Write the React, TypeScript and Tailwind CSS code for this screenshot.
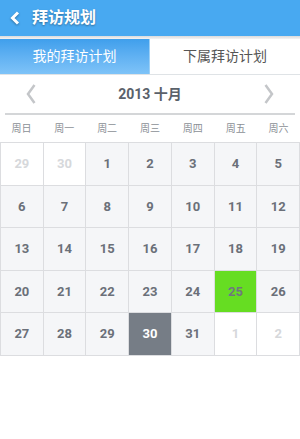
type Day = { n: number; other?: boolean; green?: boolean; dark?: boolean };

const weekdays = ['周日', '周一', '周二', '周三', '周四', '周五', '周六'];

const buildDays = (): Day[] => {
  const days: Day[] = [{ n: 29, other: true }, { n: 30, other: true }];
  for (let i = 1; i <= 31; i++) {
    days.push({ n: i, green: i === 25, dark: i === 30 });
  }
  days.push({ n: 1, other: true }, { n: 2, other: true });
  return days;
};

const App = () => {
  const days = buildDays();

  return (
    <div
      className="w-[300px] h-[439px] bg-white overflow-hidden"
      style={{ fontFamily: 'Roboto, "Noto Sans CJK SC", sans-serif' }}
    >
      {/* title bar */}
      <div className="h-[36px] bg-[#48a9f1] flex items-center pl-[10px]">
        <svg width="10" height="14" viewBox="0 0 10 14" className="mr-[12px] drop-shadow-[0_1px_1px_rgba(0,0,0,0.35)]">
          <polyline points="8,1.5 2.5,7 8,12.5" fill="none" stroke="white" strokeWidth="3" strokeLinejoin="miter" />
        </svg>
        <span className="text-white text-[16px] font-bold [text-shadow:0_1px_2px_rgba(0,0,0,0.35)]">拜访规划</span>
      </div>
      <div className="h-[3px] bg-gradient-to-b from-[#d9dadc] to-[#f4f4f4]" />

      {/* tabs */}
      <div className="flex h-[36px] border-b border-[#dfe3e6]">
        <div className="w-[150px] bg-gradient-to-b from-[#3f9fec] to-[#7ec3f8] border-r border-[#9cd0f7] flex items-center justify-center text-white text-[14px]">
          我的拜访计划
        </div>
        <div className="flex-1 bg-white flex items-center justify-center text-[#555] text-[14px]">
          下属拜访计划
        </div>
      </div>

      {/* month nav */}
      <div className="mx-[5px] h-[40px] flex items-center justify-between border-b-2 border-[#d4d6d8]">
        <svg width="10" height="20" viewBox="0 0 10 20" className="ml-[21px]">
          <polyline points="8.5,1 2,10 8.5,19" fill="none" stroke="#c4c6c9" strokeWidth="2.5" />
        </svg>
        <span className="text-[14px] font-bold text-[#5a616a]">2013 十月</span>
        <svg width="10" height="20" viewBox="0 0 10 20" className="mr-[21px]">
          <polyline points="1.5,1 8,10 1.5,19" fill="none" stroke="#c4c6c9" strokeWidth="2.5" />
        </svg>
      </div>

      {/* weekday labels */}
      <div className="grid grid-cols-7 h-[27px] items-center">
        {weekdays.map((w) => (
          <span key={w} className="text-center text-[10px] text-[#8b9096]">
            {w}
          </span>
        ))}
      </div>

      {/* days */}
      <div className="grid grid-cols-7 border-t border-l border-[#dcdde0]">
        {days.map((d, i) => (
          <div
            key={i}
            className={`h-[42.6px] flex items-center justify-center border-r border-b border-[#dcdde0] text-[13px] font-bold ${
              d.other
                ? 'bg-white text-[#d6d8db]'
                : d.green
                ? 'bg-[#66dd22] text-[#6f7780]'
                : d.dark
                ? 'bg-[#767d86] text-white'
                : 'bg-[#f5f6f8] text-[#6b7079]'
            }`}
          >
            {d.n}
          </div>
        ))}
      </div>
    </div>
  );
};

export default App;
